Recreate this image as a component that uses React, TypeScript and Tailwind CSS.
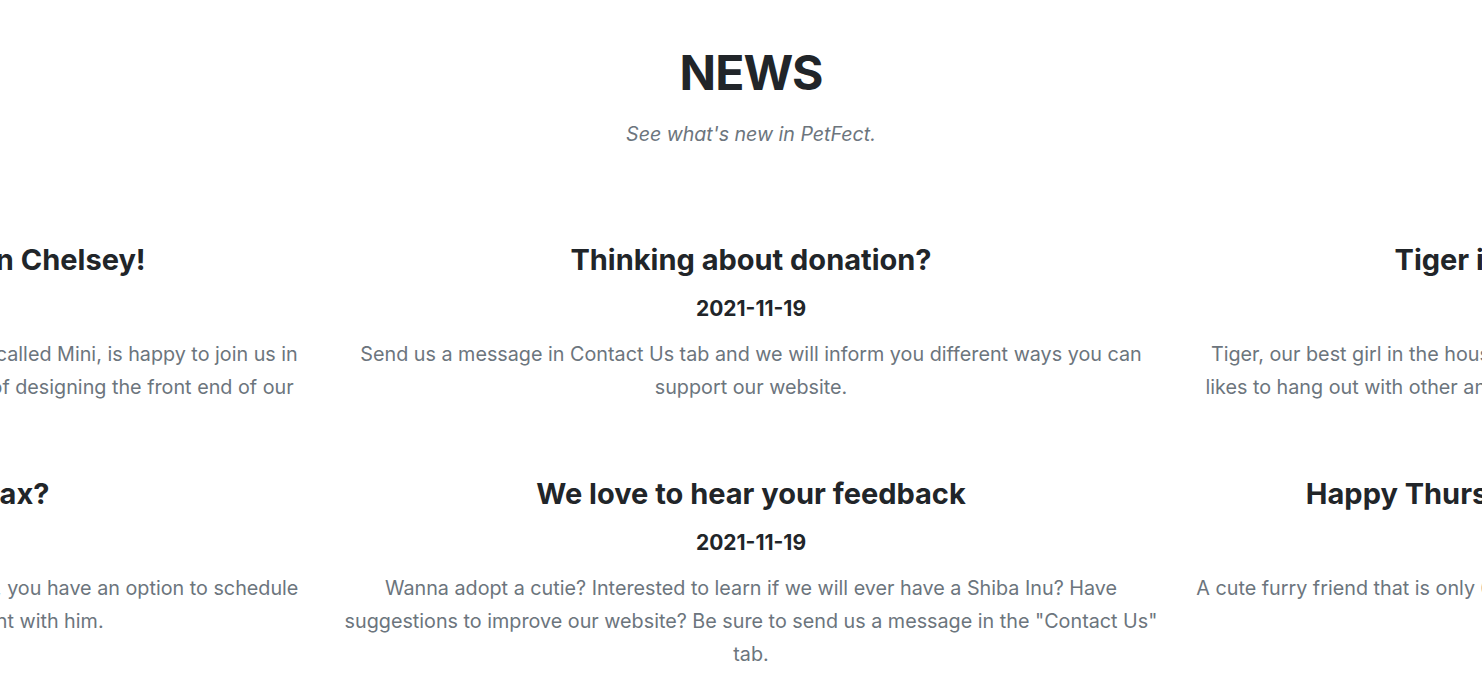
import React from "react";

type Item = { title: string; date?: string; body: string[] };

const rows: Item[][] = [
  [
    {
      title: "Welcome to our top intern Chelsey!",
      body: [
        "Our lovable new intern Chelsey, who is affectionately called Mini, is happy to join us in",
        "our missions, and will take part in the entire process of designing the front end of our",
        "website.",
      ],
    },
    {
      title: "Thinking about donation?",
      date: "2021-11-19",
      body: [
        "Send us a message in Contact Us tab and we will inform you different ways you can support our website.",
      ],
    },
    {
      title: "Tiger is searching for a home!",
      body: [
        "Tiger, our best girl in the house, is a very sweet and gentle cat who loves to play and",
        "likes to hang out with other animals in the shelter during the whole day. Come to meet",
        "her!",
      ],
    },
  ],
  [
    {
      title: "Want to see our Max?",
      body: [
        "Max is finally ready to find his forever family, and now, you have an option to schedule",
        "a fun meet-and-greet appointment with him.",
      ],
    },
    {
      title: "We love to hear your feedback",
      date: "2021-11-19",
      body: [
        'Wanna adopt a cutie? Interested to learn if we will ever have a Shiba Inu? Have suggestions to improve our website? Be sure to send us a message in the "Contact Us" tab.',
      ],
    },
    {
      title: "Happy Thursday from all our furry friends!",
      body: [
        "A cute furry friend that is only 6 months old is now waiting for a new loving home to call",
        "her own. Visit us!",
      ],
    },
  ],
];

function NewsItem({ item }: { item: Item }) {
  return (
    <div className="w-[830px] shrink-0 text-center">
      <h3 className="text-[29px] leading-[34px] font-bold text-[#212529]">{item.title}</h3>
      <div className="mt-[20px] h-[24px] text-[21px] leading-[24px] font-bold text-[#212529]">
        {item.date ?? ""}
      </div>
      <p className="mt-[17px] text-[19.75px] leading-[33px] text-[#6c757d]">
        {item.body.map((line, i) => (
          <React.Fragment key={i}>
            {i > 0 && <br />}
            {line}
          </React.Fragment>
        ))}
      </p>
    </div>
  );
}

export default function App() {
  return (
    <div
      className="h-[680px] w-full overflow-hidden bg-white pl-[20px]"
      style={{ fontFamily: "Inter, 'Noto Sans', sans-serif" }}
    >
      <div className="pt-[44px] text-center">
        <h1 className="text-[48px] leading-[58px] font-bold tracking-[-0.02em] text-[#212529]">NEWS</h1>
        <p className="mt-[18px] text-[19.6px] leading-[28px] italic text-[#6c757d]">
          See what&apos;s new in PetFect.
        </p>
      </div>
      <div className="mt-[95px] flex flex-col gap-y-[40px]">
        {rows.map((row, i) => (
          <div key={i} className="flex justify-center gap-x-6">
            {row.map((item, j) => (
              <NewsItem key={j} item={item} />
            ))}
          </div>
        ))}
      </div>
    </div>
  );
}
